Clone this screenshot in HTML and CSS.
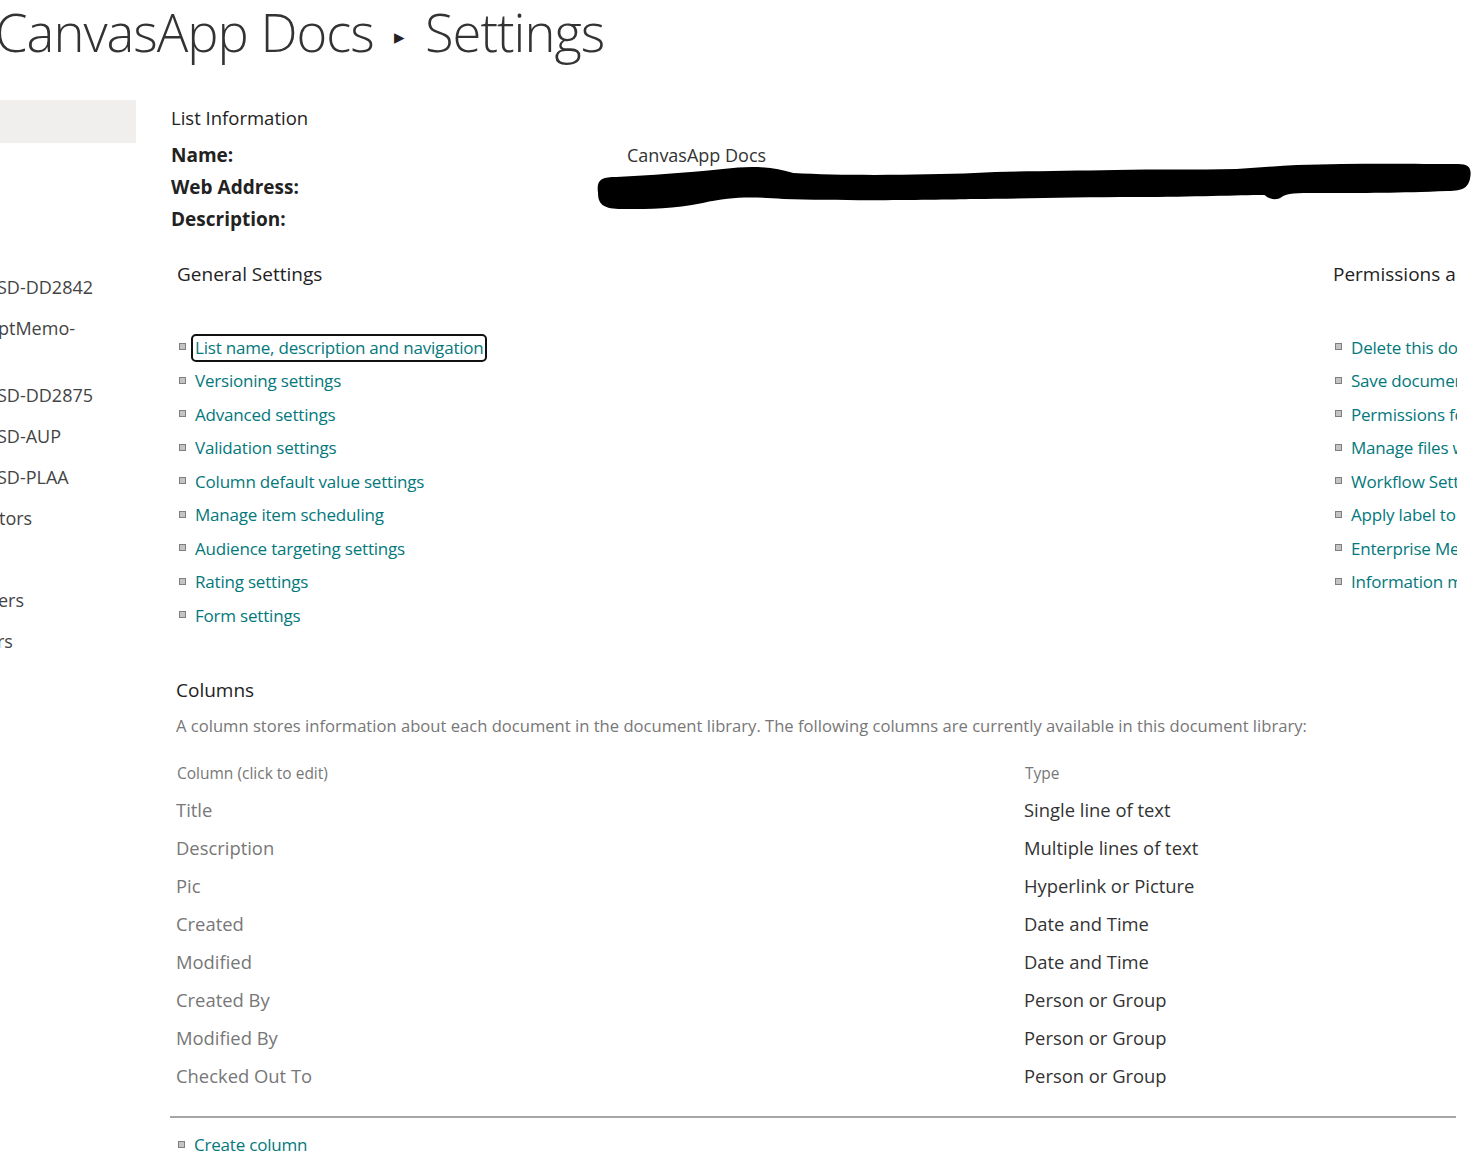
FILE: index.html
```html
<!DOCTYPE html>
<html>
<head>
<meta charset="utf-8">
<link rel="stylesheet" href="styles.css">
</head>
<body>
<div class="page">
  <h1 class="title">CanvasApp Docs <span class="crumb">&#9656;</span> Settings</h1>
  <div class="layout">
    <nav class="nav">
      <div class="nav-box"></div>
      <ul class="nav-list">
        <li class="n1">SD-DD2842</li>
        <li class="n2">ptMemo-</li>
        <li class="n3">SD-DD2875</li>
        <li class="n1">SD-AUP</li>
        <li class="n1">SD-PLAA</li>
        <li class="n4">tors</li>
        <li class="n5">ers</li>
        <li class="n6">rs</li>
      </ul>
    </nav>
    <main class="main">
      <section class="info">
        <h2 class="info-title">List Information</h2>
        <div class="info-grid">
          <div class="info-label">Name:</div><div class="info-value">CanvasApp Docs</div>
          <div class="info-label">Web Address:</div><div class="info-value"></div>
          <div class="info-label">Description:</div><div class="info-value"></div>
        </div>
        <svg class="scribble" width="886" height="52" viewBox="0 0 880 52" preserveAspectRatio="none">
          <path d="M6 30 C4 16 10 14 24 14 C60 12 90 10 130 6 C160 2 180 4 200 10 C250 13 330 12 380 10 C420 8 470 8 520 7 C560 6 600 7 640 6 C660 5 680 3 700 2 C760 0 820 1 860 1 C872 1 874 6 872 16 C870 24 866 28 850 28 C800 30 770 30 720 30 C700 30 690 30 685 34 C680 38 672 36 668 32 C640 32 600 34 540 34 C480 34 420 36 380 36 C340 37 250 38 190 36 C160 34 140 33 110 40 C80 46 60 46 30 46 C12 46 6 42 6 30 Z" fill="#000"/>
        </svg>
      </section>

      <section class="settings">
        <div class="settings-col left">
          <h2 class="sec-title">General Settings</h2>
          <ul class="links">
            <li><a class="link focused">List name, description and navigation</a></li>
            <li><a class="link">Versioning settings</a></li>
            <li><a class="link">Advanced settings</a></li>
            <li><a class="link">Validation settings</a></li>
            <li><a class="link">Column default value settings</a></li>
            <li><a class="link">Manage item scheduling</a></li>
            <li><a class="link">Audience targeting settings</a></li>
            <li><a class="link">Rating settings</a></li>
            <li><a class="link">Form settings</a></li>
          </ul>
        </div>
        <div class="settings-col right">
          <h2 class="sec-title">Permissions and Management</h2>
          <ul class="links">
            <li><a class="link">Delete this document library</a></li>
            <li><a class="link">Save document library as template</a></li>
            <li><a class="link">Permissions for this document library</a></li>
            <li><a class="link">Manage files which have no checked in version</a></li>
            <li><a class="link">Workflow Settings</a></li>
            <li><a class="link">Apply label to items in this list or library</a></li>
            <li><a class="link">Enterprise Metadata and Keywords Settings</a></li>
            <li><a class="link">Information management policy settings</a></li>
          </ul>
        </div>
      </section>

      <section class="columns">
        <h2 class="sec-title">Columns</h2>
        <p class="col-desc">A column stores information about each document in the document library. The following columns are currently available in this document library:</p>
        <div class="col-table">
          <div class="th">Column (click to edit)</div><div class="th">Type</div>
          <div class="cname">Title</div><div class="ctype">Single line of text</div>
          <div class="cname">Description</div><div class="ctype">Multiple lines of text</div>
          <div class="cname">Pic</div><div class="ctype">Hyperlink or Picture</div>
          <div class="cname">Created</div><div class="ctype">Date and Time</div>
          <div class="cname">Modified</div><div class="ctype">Date and Time</div>
          <div class="cname">Created By</div><div class="ctype">Person or Group</div>
          <div class="cname">Modified By</div><div class="ctype">Person or Group</div>
          <div class="cname">Checked Out To</div><div class="ctype">Person or Group</div>
        </div>
        <hr class="rule">
        <ul class="links">
          <li><a class="link">Create column</a></li>
        </ul>
      </section>
    </main>
  </div>
</div>
</body>
</html>
```

FILE: styles.css
```css
html, body {
  margin: 0;
  padding: 0;
  background: #fff;
  overflow: hidden;
}
body {
  font-family: "Open Sans", "Noto Sans", sans-serif;
  color: #333;
  width: 1472px;
  height: 1164px;
}
.page {
  display: flex;
  flex-direction: column;
}
.title {
  margin: 0 0 0 -5px;
  height: 100px;
  font-weight: 300;
  font-size: 52.5px;
  line-height: 64px;
  color: #333;
  white-space: nowrap;
  letter-spacing: -1px;
}
.crumb {
  font-size: 21px;
  vertical-align: 8px;
  margin: 0 8px;
  color: #222;
}
.layout {
  display: flex;
}
.nav {
  width: 136px;
  flex: none;
  overflow: hidden;
}
.nav-box {
  height: 43px;
  background: #f0efee;
}
.nav-list {
  list-style: none;
  margin: 131px 0 0 0;
  padding: 0;
  font-size: 18px;
  color: #444;
  line-height: 26px;
}
.nav-list li {
  margin-left: -3px;
  height: 41px;
  white-space: nowrap;
}
.nav-list .n2 { height: 67px; margin-left: -2px; }
.nav-list .n4 { height: 82px; margin-left: -1px; }
.nav-list .n5 { margin-left: -2px; }
.nav-list .n6 { margin-left: -3px; }

.main {
  width: 1286px;
  margin-left: 35px;
  flex: none;
}
.info {
  position: relative;
}
.info-title {
  margin: 4px 0 0 0;
  font-size: 18.5px;
  font-weight: 400;
  line-height: 28px;
  color: #222;
}
.info-grid {
  display: grid;
  grid-template-columns: 456px 1fr;
  margin-top: 7px;
}
.info-label {
  font-weight: 700;
  font-size: 19px;
  line-height: 32px;
  color: #222;
}
.info-value {
  font-size: 18px;
  line-height: 32px;
  color: #333;
}
.scribble {
  position: absolute;
  left: 421px;
  top: 59px;
}
.settings {
  display: flex;
  justify-content: space-between;
  margin-top: 25px;
}
.settings-col.left {
  padding-left: 6px;
}
.settings-col.right {
  width: 124px;
  overflow: hidden;
  white-space: nowrap;
}
.sec-title {
  margin: 0;
  font-size: 19px;
  font-weight: 400;
  line-height: 28px;
  color: #222;
  white-space: nowrap;
}
.links {
  list-style: none;
  margin: 43px 0 0 0;
  padding: 0;
}
.links li {
  display: flex;
  align-items: center;
  height: 33.5px;
  white-space: nowrap;
}
.links li::before {
  content: "";
  width: 7px;
  height: 7px;
  margin-left: 2px;
  margin-right: 9px;
  flex: none;
  background: #c4c4c4;
  border: 1px solid #7f7f7f;
  box-sizing: border-box;
  position: relative;
  top: -1px;
}
.link {
  font-size: 17px;
  letter-spacing: -0.2px;
  color: #03787c;
  line-height: 24px;
}
.link.focused {
  outline: 2px solid #111;
  outline-offset: 0;
  border-radius: 3px;
  margin-left: -2px;
  padding: 0 1px 0 2px;
}
.columns {
  margin-top: 43px;
  padding-left: 5px;
}
.col-desc {
  margin: 10px 0 0 0;
  font-size: 16.6px;
  line-height: 24px;
  color: #777;
  white-space: nowrap;
}
.col-table {
  display: grid;
  grid-template-columns: 848px 1fr;
  margin-top: 23px;
}
.th {
  font-size: 15.5px;
  color: #777;
  line-height: 24px;
  height: 30px;
  padding-left: 1px;
}
.cname, .ctype {
  font-size: 18.4px;
  line-height: 38px;
  height: 38px;
  color: #777;
}
.ctype {
  color: #333;
}
.rule {
  border: none;
  border-top: 2px solid #a6a6a6;
  margin: 21px 0 0 -6px;
  width: 1286px;
}
.columns .links {
  margin-top: 11px;
}
```
